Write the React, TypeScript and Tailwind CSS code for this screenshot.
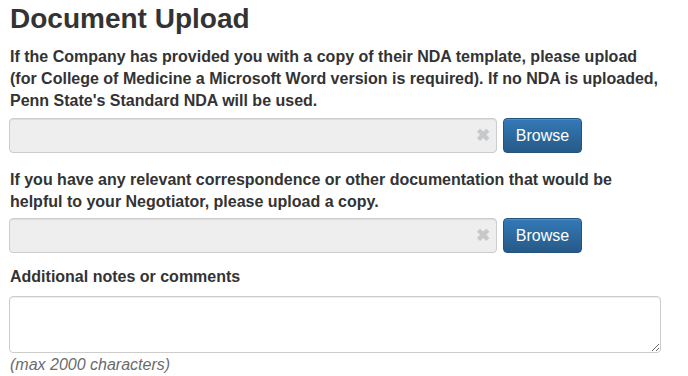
export default function App() {
  return (
    <div className="min-h-screen bg-white px-[10px] pt-[3px] text-[#333] font-['Liberation_Sans',Arial,sans-serif]">
      <h1 className="text-[28px] font-bold leading-[31px]">Document Upload</h1>

      <p className="mt-[12px] text-[16px] font-bold leading-[22px]">
        If the Company has provided you with a copy of their NDA template, please upload
        <br />
        (for College of Medicine a Microsoft Word version is required). If no NDA is uploaded,
        <br />
        Penn State&apos;s Standard NDA will be used.
      </p>
      <FileRow className="mt-[6px]" />

      <p className="mt-[16px] text-[16px] font-bold leading-[22px]">
        If you have any relevant correspondence or other documentation that would be
        <br />
        helpful to your Negotiator, please upload a copy.
      </p>
      <FileRow className="mt-[5px]" />

      <p className="mt-[13px] text-[16px] font-bold leading-[22px]">Additional notes or comments</p>
      <textarea className="mt-[8px] -ml-px block h-[57px] w-[652px] rounded-[4px] border border-[#ccc] bg-white shadow-[inset_0_1px_1px_rgba(0,0,0,0.075)] outline-none" />
      <p className="mt-[2px] text-[16px] italic leading-[20px] text-[#6b6b6b]">(max 2000 characters)</p>
    </div>
  );
}

function FileRow({ className = "" }: { className?: string }) {
  return (
    <div className={`-ml-px flex items-center gap-[6px] ${className}`}>
      <div className="flex h-[35px] w-[488px] items-center justify-end rounded-[4px] border border-[#ccc] bg-[#eee] pr-[6px] shadow-[inset_0_1px_1px_rgba(0,0,0,0.075)]">
        <span className="text-[17px] font-bold leading-none text-[#c8c8c8]">✖</span>
      </div>
      <button className="h-[35px] w-[79px] rounded-[4px] border border-[#245580] bg-gradient-to-b from-[#337ab7] to-[#265a88] text-[16px] leading-none text-white shadow-[inset_0_1px_0_rgba(255,255,255,0.15)]">
        Browse
      </button>
    </div>
  );
}
